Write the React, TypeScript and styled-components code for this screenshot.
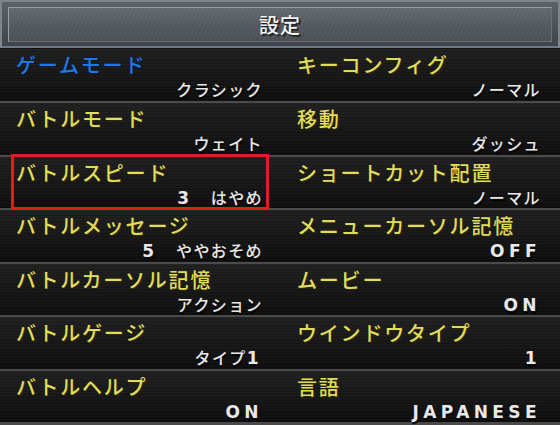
import React from "react";
import styled, { createGlobalStyle } from "styled-components";

const GlobalStyle = createGlobalStyle`
  html, body {
    margin: 0;
    padding: 0;
    background: #000;
  }
  * {
    box-sizing: border-box;
  }
`;

// 화면 전체
const Screen = styled.div`
  width: 560px;
  height: 425px;
  display: flex;
  flex-direction: column;
  background: #0b0b0b;
  font-family: "Noto Sans CJK JP", "DejaVu Sans", sans-serif;
  overflow: hidden;
`;

const Header = styled.div`
  height: 48px;
  padding: 5px 6px 4px 6px;
  background: linear-gradient(to bottom, #5d6269, #3f444b);
  border: 2px solid #80858c;
  border-bottom: 2px solid #6f7a88;
`;

const HeaderPanel = styled.div`
  height: 100%;
  display: flex;
  align-items: center;
  justify-content: center;
  border: 1px solid #9aa0a7;
  border-right-color: #6c7178;
  border-bottom-color: #6c7178;
  background:
    repeating-linear-gradient(
      115deg,
      rgba(255, 255, 255, 0.03) 0px,
      rgba(0, 0, 0, 0.04) 2px,
      rgba(255, 255, 255, 0.02) 4px
    ),
    linear-gradient(to bottom, #666b72, #555a61 55%, #4c5157);
`;

const Title = styled.div`
  color: #f4f4f4;
  font-size: 20px;
  font-weight: 500;
  letter-spacing: 1px;
  text-shadow: 1px 1px 0 #1c1f24, 2px 2px 1px #2a2d32;
`;

const Body = styled.div`
  flex: 1;
  display: grid;
  grid-template-rows: repeat(7, 1fr);
  border-bottom: 3px solid #4a4a4a;
`;

const Row = styled.div<{ $first?: boolean }>`
  display: grid;
  grid-template-columns: 280px 280px;
  border-top: ${(p) => (p.$first ? "1px solid #111" : "2px solid #4b4b4b")};
  background:
    repeating-linear-gradient(
      to bottom,
      rgba(255, 255, 255, 0.025) 0px,
      rgba(255, 255, 255, 0.025) 1px,
      rgba(0, 0, 0, 0.05) 2px,
      rgba(0, 0, 0, 0) 3px
    ),
    linear-gradient(to bottom, #1f1f1f 0%, #171717 45%, #0c0c0c 100%);
`;

const Cell = styled.div<{ $side: "left" | "right"; $marked?: boolean }>`
  position: relative;
  display: flex;
  flex-direction: column;
  padding: 4px ${(p) => (p.$side === "left" ? "18px" : "20px")} 0
    ${(p) => (p.$side === "left" ? "16px" : "17px")};

  &::after {
    content: "";
    display: ${(p) => (p.$marked ? "block" : "none")};
    position: absolute;
    top: -3px;
    left: 11px;
    right: 11px;
    bottom: -2px;
    border: 3px solid #e51a22;
    pointer-events: none;
  }
`;

const Label = styled.div<{ $active?: boolean }>`
  font-size: 20px;
  line-height: 23px;
  font-weight: 500;
  letter-spacing: 1.8px;
  white-space: nowrap;
  color: ${(p) => (p.$active ? "#1f78e4" : "#e0dc5c")};
  text-shadow: 1px 1px 0 ${(p) => (p.$active ? "#06142a" : "#2a2806")};
`;

const Value = styled.div`
  align-self: flex-end;
  height: 21px;
  margin-top: 3px;
  font-size: 16px;
  line-height: 21px;
  font-weight: 500;
  letter-spacing: 1.4px;
  margin-right: -1px;
  white-space: pre;
  color: #e8e8e8;
  text-shadow: 1px 1px 0 #111, 1px 2px 1px #000;
`;

const Latin = styled.span`
  font-family: "DejaVu Sans", sans-serif;
  font-size: 17px;
  line-height: 17px;
  font-weight: 700;
  letter-spacing: 4.4px;
`;

interface Setting {
  label: string;
  value: React.ReactNode;
  active?: boolean;
  marked?: boolean;
}

const rows: [Setting, Setting][] = [
  [
    { label: "ゲームモード", value: "クラシック", active: true },
    { label: "キーコンフィグ", value: "ノーマル" },
  ],
  [
    { label: "バトルモード", value: "ウェイト" },
    { label: "移動", value: "ダッシュ" },
  ],
  [
    {
      label: "バトルスピード",
      value: (
        <>
          <Latin>3</Latin>
          {"　はやめ"}
        </>
      ),
      marked: true,
    },
    { label: "ショートカット配置", value: "ノーマル" },
  ],
  [
    {
      label: "バトルメッセージ",
      value: (
        <>
          <Latin>5</Latin>
          {"　ややおそめ"}
        </>
      ),
    },
    { label: "メニューカーソル記憶", value: <Latin>OFF</Latin> },
  ],
  [
    { label: "バトルカーソル記憶", value: "アクション" },
    { label: "ムービー", value: <Latin>ON</Latin> },
  ],
  [
    {
      label: "バトルゲージ",
      value: (
        <>
          タイプ<Latin>1</Latin>
        </>
      ),
    },
    { label: "ウインドウタイプ", value: <Latin>1</Latin> },
  ],
  [
    { label: "バトルヘルプ", value: <Latin>ON</Latin> },
    { label: "言語", value: <Latin>JAPANESE</Latin> },
  ],
];

const App: React.FC = () => {
  return (
    <>
      <GlobalStyle />
      <Screen>
        <Header>
          <HeaderPanel>
            <Title>設定</Title>
          </HeaderPanel>
        </Header>
        <Body>
          {rows.map((pair, i) => (
            <Row key={i} $first={i === 0}>
              {pair.map((s, j) => (
                <Cell key={s.label} $side={j === 0 ? "left" : "right"} $marked={s.marked}>
                  <Label $active={s.active}>{s.label}</Label>
                  <Value>{s.value}</Value>
                </Cell>
              ))}
            </Row>
          ))}
        </Body>
      </Screen>
    </>
  );
};

export default App;
